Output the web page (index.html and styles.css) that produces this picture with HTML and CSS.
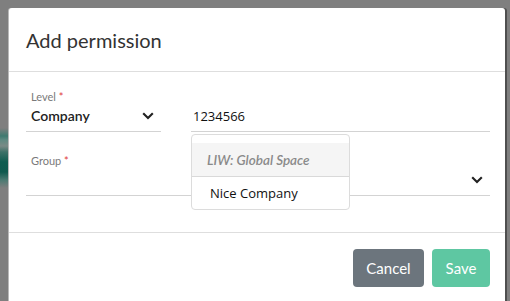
FILE: index.html
```html
<!DOCTYPE html>
<html>
<head>
<meta charset="utf-8">
<link rel="stylesheet" href="styles.css">
</head>
<body>
<div class="backdrop"></div>
<div class="modal">
  <div class="modal-header">
    <h1 class="title">Add permission</h1>
  </div>
  <div class="modal-body">
    <div class="row">
      <div class="field field-level">
        <div class="label">Level <span class="req">*</span></div>
        <div class="value">
          <span class="value-text">Company</span>
          <svg class="chev" width="12" height="8" viewBox="0 0 12 8"><path d="M1.2 1.2 6 6 10.8 1.2" fill="none" stroke="#222" stroke-width="2.1"/></svg>
        </div>
      </div>
      <div class="field field-search">
        <div class="label"></div>
        <div class="value"><span class="input-text">1234566</span></div>
        <div class="dropdown">
          <div class="dd-group">LIW: Global Space</div>
          <div class="dd-item">Nice Company</div>
        </div>
      </div>
    </div>
    <div class="row">
      <div class="field field-group">
        <div class="label">Group <span class="req">*</span></div>
        <div class="value">
          <span class="value-text"></span>
          <svg class="chev" width="12" height="8" viewBox="0 0 12 8"><path d="M1.2 1.2 6 6 10.8 1.2" fill="none" stroke="#222" stroke-width="2.1"/></svg>
        </div>
      </div>
    </div>
  </div>
  <div class="modal-footer">
    <button class="btn btn-cancel">Cancel</button>
    <button class="btn btn-save">Save</button>
  </div>
</div>
</body>
</html>
```
FILE: styles.css
```css
html, body {
  margin: 0;
  padding: 0;
}
body {
  width: 510px;
  height: 301px;
  overflow: hidden;
  background: #7f7f7f;
  position: relative;
  font-family: "Lato", "Open Sans", sans-serif;
}
.backdrop {
  position: absolute;
  left: 0;
  top: 128px;
  width: 9px;
  height: 60px;
  background: linear-gradient(to bottom,
    #7f7f7f 0px, #3f7a70 8px, #5f8a82 12px, #7a8a86 18px,
    #3d7168 24px, #0f5c50 34px, #105a4f 44px, #4b7a72 52px, #7f7f7f 60px);
}
.modal {
  position: absolute;
  left: 9px;
  top: 8px;
  width: 496px;
  height: 300px;
  background: #fff;
  border-radius: 3px 3px 0 0;
  box-shadow: -1px 0 0 #b9b9b9, 2px 0 0 #4f4f4f;
}
.modal-header {
  padding: 20px 17px 18px;
  border-bottom: 1px solid #dedede;
}
.title {
  margin: 0;
  font-size: 20px;
  line-height: 25px;
  font-weight: 400;
  color: #333;
}
.modal-body {
  padding: 18px 15px 36px 17px;
  display: flex;
  flex-direction: column;
  gap: 22px;
  border-bottom: 1px solid #dedede;
}
.row {
  display: flex;
  gap: 30px;
}
.field {
  border-bottom: 1px solid #d3d3d3;
  padding: 0 7px 4px 5px;
  position: relative;
}
.field-level { width: 123px; }
.field-search { flex: 1; padding-left: 2px; }
.field-group { flex: 1; }
.label {
  height: 14px;
  font-size: 11px;
  line-height: 14px;
  color: #7a7a7a;
}
.req { color: #e03c3c; }
.value {
  height: 23px;
  display: flex;
  align-items: center;
  justify-content: space-between;
}
.value-text {
  font-size: 14px;
  font-weight: 600;
  color: #222;
}
.input-text {
  font-family: "Open Sans", sans-serif;
  font-size: 13px;
  color: #111;
}
.chev { display: block; }
.dropdown {
  position: absolute;
  left: 0;
  top: 44px;
  width: 157px;
  border: 1px solid #dcdcdc;
  border-radius: 4px;
  background: #fff;
  padding-top: 8px;
  z-index: 2;
}
.dd-group {
  height: 33px;
  background: #f5f5f5;
  border-bottom: 1px solid #d9d9d9;
  padding-left: 15px;
  display: flex;
  align-items: center;
  font-size: 13.5px;
  font-style: italic;
  font-weight: 600;
  color: #8a8a8a;
}
.dd-item {
  height: 32px;
  display: flex;
  align-items: center;
  padding-left: 18px;
  font-family: "Open Sans", sans-serif;
  font-size: 13px;
  color: #111;
}
.modal-footer {
  padding: 16px 15px 0 0;
  display: flex;
  justify-content: flex-end;
  gap: 8px;
}
.btn {
  height: 38px;
  border: 0;
  border-radius: 4px;
  color: #fff;
  font-family: "Lato", sans-serif;
  font-size: 15px;
  padding: 0;
}
.btn-cancel { width: 71px; background: #6c757d; }
.btn-save { width: 58px; background: #5ec7a2; }
```
